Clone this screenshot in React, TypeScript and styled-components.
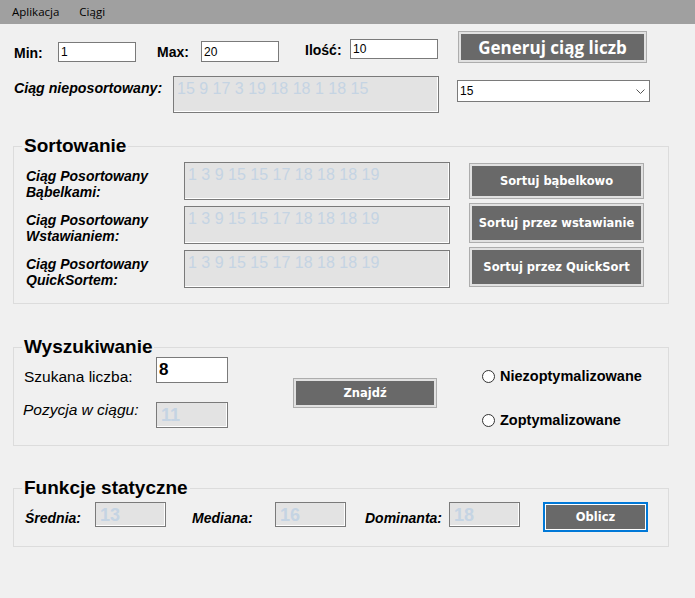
import React from "react";
import styled, { createGlobalStyle } from "styled-components";

const GlobalStyle = createGlobalStyle`
  html, body { margin: 0; padding: 0; background: #f0f0f0; }
  body { font-family: "Liberation Sans", Arial, sans-serif; color: #000; }
  * { box-sizing: border-box; }
`;

const Window = styled.div`
  width: 695px;
  height: 598px;
  background: #f0f0f0;
  overflow: hidden;
`;

const MenuBar = styled.nav`
  height: 24px;
  background: #a0a0a0;
  display: flex;
  align-items: center;
  gap: 20px;
  padding-left: 12px;
  font-family: "Open Sans", "Noto Sans", sans-serif;
  font-size: 11.5px;
`;

const MenuItem = styled.span`
  line-height: 16px;
  color: #000;
`;

const Top = styled.div`
  padding-left: 14px;
`;

const Row = styled.div<{ $mt?: number }>`
  display: flex;
  align-items: flex-start;
  margin-top: ${(p) => p.$mt ?? 0}px;
`;

const Column = styled.div<{ $gap?: number; $mt?: number; $ml?: number }>`
  display: flex;
  flex-direction: column;
  gap: ${(p) => p.$gap ?? 0}px;
  margin-top: ${(p) => p.$mt ?? 0}px;
  margin-left: ${(p) => p.$ml ?? 0}px;
`;

const Label = styled.span<{
  $w?: number;
  $mt?: number;
  $ml?: number;
  $size?: number;
  $italic?: boolean;
  $bold?: boolean;
  $lh?: number;
}>`
  display: block;
  flex: none;
  width: ${(p) => (p.$w ? `${p.$w}px` : "auto")};
  margin-top: ${(p) => p.$mt ?? 0}px;
  margin-left: ${(p) => p.$ml ?? 0}px;
  font-size: ${(p) => p.$size ?? 14}px;
  line-height: ${(p) => p.$lh ?? 16}px;
  font-style: ${(p) => (p.$italic ? "italic" : "normal")};
  font-weight: ${(p) => (p.$bold ? 700 : 400)};
  white-space: nowrap;
`;

const TextInput = styled.input<{ $w: number; $h: number; $mt?: number; $big?: boolean }>`
  flex: none;
  width: ${(p) => p.$w}px;
  height: ${(p) => p.$h}px;
  margin: ${(p) => p.$mt ?? 0}px 0 0 0;
  padding: 0 0 0 2px;
  border: 1px solid #7a7a7a;
  background: #fff;
  color: #000;
  font-family: "Liberation Sans", Arial, sans-serif;
  font-size: ${(p) => (p.$big ? 17 : 12)}px;
  font-weight: ${(p) => (p.$big ? 700 : 400)};
  outline: none;
`;

const ReadField = styled.div<{ $w: number; $h: number; $mt?: number; $ml?: number; $big?: boolean }>`
  flex: none;
  width: ${(p) => p.$w}px;
  height: ${(p) => p.$h}px;
  margin: ${(p) => p.$mt ?? 0}px 0 0 ${(p) => p.$ml ?? 0}px;
  padding: ${(p) => (p.$big ? "2px 0 0 4px" : "3px 0 0 3px")};
  border: 1px solid #7a7a7a;
  box-shadow: inset -1px -1px 0 #fff;
  background: #e3e3e3;
  color: #c5d4e3;
  font-size: ${(p) => (p.$big ? 18 : 16)}px;
  line-height: ${(p) => (p.$big ? 20 : 18)}px;
  font-weight: ${(p) => (p.$big ? 700 : 400)};
  white-space: nowrap;
  overflow: hidden;
`;

const Combo = styled.div<{ $ml: number; $mt: number }>`
  flex: none;
  width: 193px;
  height: 22px;
  margin: ${(p) => p.$mt}px 0 0 ${(p) => p.$ml}px;
  padding: 0 4px 0 2px;
  display: flex;
  align-items: center;
  justify-content: space-between;
  border: 1px solid #7a7a7a;
  background: #fff;
  font-size: 12px;
`;

const Button = styled.button<{
  $w: number;
  $h: number;
  $mt?: number;
  $ml?: number;
  $big?: boolean;
  $focused?: boolean;
}>`
  flex: none;
  width: ${(p) => p.$w}px;
  height: ${(p) => p.$h}px;
  margin: ${(p) => p.$mt ?? 0}px 0 0 ${(p) => p.$ml ?? 0}px;
  padding: 0;
  background: #696969;
  color: #fff;
  border: ${(p) => (p.$focused ? "2px solid #0078d7" : "1px solid #adadad")};
  box-shadow: ${(p) => (p.$focused ? "inset 0 0 0 1px #fff" : "inset 0 0 0 2px #e1e1e1")};
  font-family: ${(p) =>
    p.$big ? `"Open Sans", "Noto Sans", sans-serif` : `"DejaVu Sans", Verdana, sans-serif`};
  font-size: ${(p) => (p.$big ? 17 : 11.5)}px;
  font-weight: 700;
  cursor: pointer;
  white-space: nowrap;
`;

const Group = styled.section<{ $mt: number; $pt: number; $pb: number; $pl: number }>`
  position: relative;
  width: 656px;
  margin: ${(p) => p.$mt}px 0 0 13px;
  padding: ${(p) => p.$pt}px 0 ${(p) => p.$pb}px ${(p) => p.$pl}px;
  border: 1px solid #dcdcdc;
`;

const GroupTitle = styled.h2`
  position: absolute;
  top: -12px;
  left: 8px;
  margin: 0;
  padding: 0 2px;
  background: #f0f0f0;
  font-size: 19px;
  line-height: 22px;
  font-weight: 700;
`;

const RadioItem = styled.label<{ $mt: number }>`
  display: flex;
  align-items: center;
  gap: 5px;
  margin-top: ${(p) => p.$mt}px;
  font-size: 14.5px;
  line-height: 18px;
  font-weight: 700;
`;

const RadioCircle = styled.span`
  width: 13px;
  height: 13px;
  border-radius: 50%;
  border: 1px solid #333;
  background: #fff;
  flex: none;
`;

const Chevron = () => (
  <svg width="9" height="5" viewBox="0 0 9 5">
    <polyline points="0.5,0.5 4.5,4.5 8.5,0.5" fill="none" stroke="#555" strokeWidth="1" />
  </svg>
);

const sorted = "1 3 9 15 15 17 18 18 18 19";

const sortRows = [
  { second: "Bąbelkami:", btn: "Sortuj bąbelkowo", h: 36 },
  { second: "Wstawianiem:", btn: "Sortuj przez wstawianie", h: 40 },
  { second: "QuickSortem:", btn: "Sortuj przez QuickSort", h: 40 },
];

export default function App() {
  return (
    <Window>
      <GlobalStyle />
      <MenuBar>
        <MenuItem>Aplikacja</MenuItem>
        <MenuItem>Ciągi</MenuItem>
      </MenuBar>

      <Top>
        <Row $mt={7}>
          <Label $w={44} $mt={14} $bold>Min:</Label>
          <TextInput $w={78} $h={20} $mt={11} defaultValue="1" />
          <Label $w={44} $mt={13} $ml={21} $bold>Max:</Label>
          <TextInput $w={78} $h={21} $mt={10} defaultValue="20" />
          <Label $w={45} $mt={11} $ml={26} $bold>Ilość:</Label>
          <TextInput $w={88} $h={20} $mt={8} defaultValue="10" />
          <Button $w={189} $h={32} $ml={20} $big>Generuj ciąg liczb</Button>
        </Row>
        <Row $mt={13}>
          <Label $w={159} $mt={4} $size={14.2} $bold $italic>Ciąg nieposortowany:</Label>
          <ReadField $w={266} $h={37}>15 9 17 3 19 18 18 1 18 15</ReadField>
          <Combo $ml={18} $mt={4}>
            <span>15</span>
            <Chevron />
          </Combo>
        </Row>
      </Top>

      <Group $mt={33} $pt={15} $pb={15} $pl={12}>
        <GroupTitle>Sortowanie</GroupTitle>
        <Row>
          <Column $gap={6}>
            {sortRows.map((r) => (
              <Row key={r.btn}>
                <Label $w={158} $mt={6} $size={14} $lh={16} $bold $italic>
                  Ciąg Posortowany
                  <br />
                  {r.second}
                </Label>
                <ReadField $w={266} $h={38}>{sorted}</ReadField>
              </Row>
            ))}
          </Column>
          <Column $gap={4} $ml={19} $mt={1}>
            {sortRows.map((r) => (
              <Button key={r.btn} $w={175} $h={r.h}>{r.btn}</Button>
            ))}
          </Column>
        </Row>
      </Group>

      <Group $mt={43} $pt={9} $pb={16} $pl={10}>
        <GroupTitle>Wyszukiwanie</GroupTitle>
        <Row>
          <Column $gap={16}>
            <Row>
              <Label $w={132} $mt={11} $size={15.5} $lh={18}>Szukana liczba:</Label>
              <TextInput $w={72} $h={26} $big defaultValue="8" />
            </Row>
            <Row>
              <Label $w={132} $ml={-1} $size={15.5} $italic>Pozycja w ciągu:</Label>
              <ReadField $w={72} $h={26} $ml={1} $big>11</ReadField>
            </Row>
          </Column>
          <Button $w={144} $h={30} $mt={21} $ml={65}>Znajdź</Button>
          <Column $ml={45}>
            <RadioItem $mt={10}>
              <RadioCircle />
              Niezoptymalizowane
            </RadioItem>
            <RadioItem $mt={26}>
              <RadioCircle />
              Zoptymalizowane
            </RadioItem>
          </Column>
        </Row>
      </Group>

      <Group $mt={42} $pt={13} $pb={14} $pl={11}>
        <GroupTitle>Funkcje statyczne</GroupTitle>
        <Row>
          <Label $w={70} $mt={8} $bold $italic>Średnia:</Label>
          <ReadField $w={71} $h={25} $big>13</ReadField>
          <Label $w={83} $mt={8} $ml={26} $bold $italic>Mediana:</Label>
          <ReadField $w={71} $h={25} $big>16</ReadField>
          <Label $w={84} $mt={8} $ml={19} $bold $italic>Dominanta:</Label>
          <ReadField $w={71} $h={25} $big>18</ReadField>
          <Button $w={105} $h={30} $ml={23} $focused>Oblicz</Button>
        </Row>
      </Group>
    </Window>
  );
}
